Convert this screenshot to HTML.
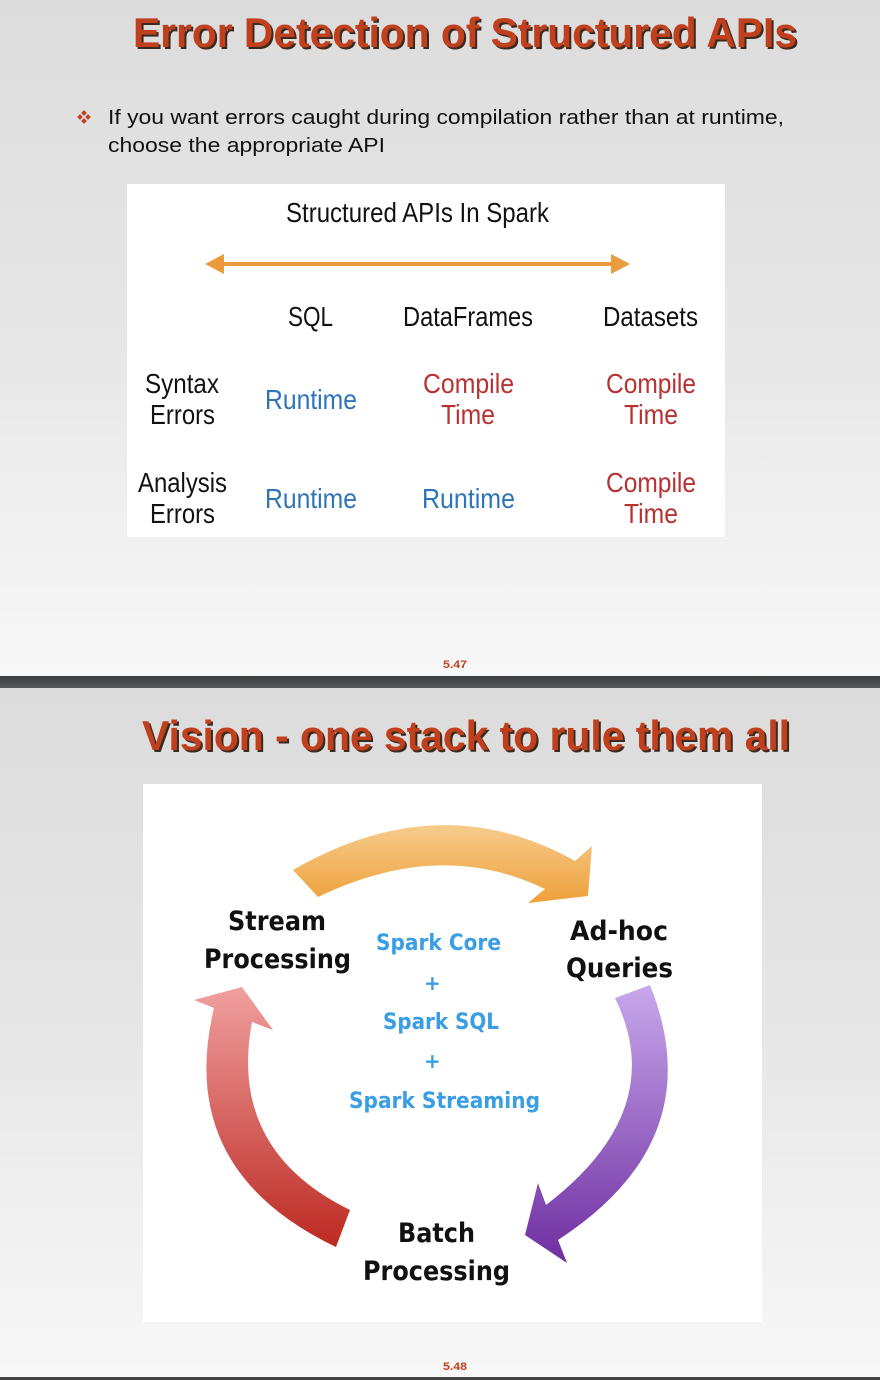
<!DOCTYPE html>
<html><head><meta charset="utf-8"><style>
html,body{margin:0;padding:0;width:880px;height:1380px;overflow:hidden;background:#eee}
svg{display:block}
</style></head><body>
<svg width="880" height="1380" viewBox="0 0 880 1380" xmlns="http://www.w3.org/2000/svg">
<defs>
<linearGradient id="bg" x1="0" y1="0" x2="0" y2="1">
<stop offset="0" stop-color="#dcdcdc"/><stop offset="0.55" stop-color="#e8e8e8"/><stop offset="1" stop-color="#f8f8f8"/></linearGradient>
<linearGradient id="bar" x1="0" y1="0" x2="0" y2="1">
<stop offset="0" stop-color="#3a3c3e"/><stop offset="1" stop-color="#585b5e"/></linearGradient>
<linearGradient id="og" x1="0" y1="0" x2="0" y2="1">
<stop offset="0" stop-color="#f6cc8c"/><stop offset="1" stop-color="#eea03a"/></linearGradient>
<linearGradient id="pg" x1="0" y1="0" x2="0" y2="1">
<stop offset="0" stop-color="#c8a8ec"/><stop offset="1" stop-color="#6e2ea0"/></linearGradient>
<linearGradient id="rg" x1="0" y1="0" x2="0" y2="1">
<stop offset="0" stop-color="#f0a0a0"/><stop offset="1" stop-color="#bc2a22"/></linearGradient>
</defs>
<rect x="0" y="0" width="880" height="676" fill="url(#bg)"/>
<rect x="0" y="676" width="880" height="12" fill="url(#bar)"/>
<rect x="0" y="688" width="880" height="689" fill="url(#bg)"/>
<rect x="0" y="1377" width="880" height="3" fill="#444"/>

<g font-family="Liberation Sans, Arial, sans-serif" font-weight="bold" font-size="42">
<text x="135" y="49" fill="#3a2a20" textLength="664" lengthAdjust="spacingAndGlyphs">Error Detection of Structured APIs</text>
<text x="133" y="47" fill="#c0401e" textLength="664" lengthAdjust="spacingAndGlyphs">Error Detection of Structured APIs</text>
<text x="144" y="752" fill="#3a2a20" textLength="648" lengthAdjust="spacingAndGlyphs">Vision - one stack to rule them all</text>
<text x="142" y="750" fill="#c0401e" textLength="648" lengthAdjust="spacingAndGlyphs">Vision - one stack to rule them all</text>
</g>

<g fill="#c0401e" transform="translate(84,117)">
<rect x="-2" y="-6" width="4" height="4" transform="rotate(45 0 -4)"/>
<rect x="-2" y="2" width="4" height="4" transform="rotate(45 0 4)"/>
<rect x="-6" y="-2" width="4" height="4" transform="rotate(45 -4 0)"/>
<rect x="2" y="-2" width="4" height="4" transform="rotate(45 4 0)"/>
</g>
<g font-family="Liberation Sans, Arial, sans-serif" font-size="20" fill="#111">
<text x="108" y="124" textLength="676" lengthAdjust="spacingAndGlyphs">If you want errors caught during compilation rather than at runtime,</text>
<text x="108" y="152" textLength="277" lengthAdjust="spacingAndGlyphs">choose the appropriate API</text>
</g>

<rect x="127" y="184" width="598" height="353" fill="#fff"/>
<g font-family="Liberation Sans Narrow, Liberation Sans, sans-serif" font-size="28" fill="#111">
<text x="286" y="222" textLength="263" lengthAdjust="spacingAndGlyphs">Structured APIs In Spark</text>
<text x="288" y="326" textLength="45" lengthAdjust="spacingAndGlyphs">SQL</text>
<text x="403" y="326" textLength="130" lengthAdjust="spacingAndGlyphs">DataFrames</text>
<text x="603" y="326" textLength="95" lengthAdjust="spacingAndGlyphs">Datasets</text>
<text x="145" y="393" textLength="74" lengthAdjust="spacingAndGlyphs">Syntax</text>
<text x="150" y="424" textLength="65" lengthAdjust="spacingAndGlyphs">Errors</text>
<text x="138" y="492" textLength="89" lengthAdjust="spacingAndGlyphs">Analysis</text>
<text x="150" y="523" textLength="65" lengthAdjust="spacingAndGlyphs">Errors</text>
<g fill="#2e74b8">
<text x="265" y="409" textLength="92" lengthAdjust="spacingAndGlyphs">Runtime</text>
<text x="265" y="508" textLength="92" lengthAdjust="spacingAndGlyphs">Runtime</text>
<text x="422" y="508" textLength="93" lengthAdjust="spacingAndGlyphs">Runtime</text>
</g>
<g fill="#b83232">
<text x="423" y="393" textLength="91" lengthAdjust="spacingAndGlyphs">Compile</text>
<text x="441" y="424" textLength="54" lengthAdjust="spacingAndGlyphs">Time</text>
<text x="606" y="393" textLength="90" lengthAdjust="spacingAndGlyphs">Compile</text>
<text x="624" y="424" textLength="54" lengthAdjust="spacingAndGlyphs">Time</text>
<text x="606" y="492" textLength="90" lengthAdjust="spacingAndGlyphs">Compile</text>
<text x="624" y="523" textLength="54" lengthAdjust="spacingAndGlyphs">Time</text>
</g>
</g>
<g fill="#eb9a3c">
<rect x="218" y="262" width="400" height="4"/>
<polygon points="205,264 224,254 224,274"/>
<polygon points="630,264 611,254 611,274"/>
</g>

<g font-family="Liberation Sans Narrow, Liberation Sans, sans-serif" font-weight="bold" font-size="11" fill="#c0401e">
<text x="443" y="668" textLength="24" lengthAdjust="spacingAndGlyphs">5.47</text>
<text x="443" y="1370" textLength="24" lengthAdjust="spacingAndGlyphs">5.48</text>
</g>

<rect x="143" y="784" width="619" height="538" fill="#fff"/>
<path d="M293,870 Q440,785 575,861 L592,846 L588,896 L528,903 L545,889 Q440,838 318,897 Z" fill="url(#og)"/>
<path d="M615,998 Q670,1110 546,1205 L538,1183 L525,1235 L567,1263 L558,1240 Q712,1140 650,985 Z" fill="url(#pg)"/>
<path d="M336,1247 Q175,1170 214,1008 L194,1000 L242,987 L273,1030 L252,1022 Q228,1150 350,1210 Z" fill="url(#rg)"/>

<g font-family="DejaVu Sans, Liberation Sans, sans-serif" font-weight="bold" fill="#111" font-size="27">
<text x="228" y="930" textLength="98" lengthAdjust="spacingAndGlyphs">Stream</text>
<text x="204" y="968" textLength="147" lengthAdjust="spacingAndGlyphs">Processing</text>
<text x="570" y="940" textLength="98" lengthAdjust="spacingAndGlyphs">Ad-hoc</text>
<text x="566" y="977" textLength="107" lengthAdjust="spacingAndGlyphs">Queries</text>
<text x="398" y="1242" textLength="77" lengthAdjust="spacingAndGlyphs">Batch</text>
<text x="363" y="1280" textLength="147" lengthAdjust="spacingAndGlyphs">Processing</text>
</g>
<g font-family="DejaVu Sans, Liberation Sans, sans-serif" font-weight="bold" fill="#3a9ee4" font-size="22">
<text x="376" y="950" textLength="125" lengthAdjust="spacingAndGlyphs">Spark Core</text>
<text x="424" y="990" font-size="20">+</text>
<text x="383" y="1029" textLength="116" lengthAdjust="spacingAndGlyphs">Spark SQL</text>
<text x="424" y="1068" font-size="20">+</text>
<text x="349" y="1108" textLength="191" lengthAdjust="spacingAndGlyphs">Spark Streaming</text>
</g>
</svg>
</body></html>
